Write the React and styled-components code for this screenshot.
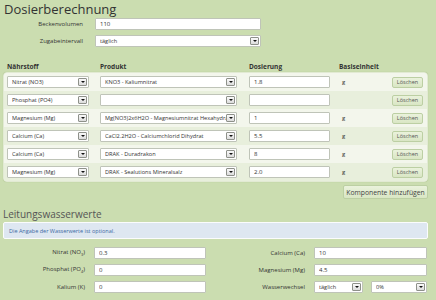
import React from "react";
import styled, { createGlobalStyle } from "styled-components";

const GlobalStyle = createGlobalStyle`
  html, body {
    margin: 0;
    background: #cbddb0;
    font-family: "Open Sans", "DejaVu Sans", sans-serif;
    color: #333;
  }
`;

const components = [
  { stoff: "Nitrat (NO3)", produkt: "KNO3 - Kaliumnitrat", dosis: "1.8", unit: "g" },
  { stoff: "Phosphat (PO4)", produkt: "", dosis: "", unit: "" },
  { stoff: "Magnesium (Mg)", produkt: "Mg(NO3)2x6H2O - Magnesiumnitrat Hexahydrat", dosis: "1", unit: "g" },
  { stoff: "Calcium (Ca)", produkt: "CaCl2.2H2O - Calciumchlorid Dihydrat", dosis: "5.5", unit: "g" },
  { stoff: "Calcium (Ca)", produkt: "DRAK - Duradrakon", dosis: "8", unit: "g" },
  { stoff: "Magnesium (Mg)", produkt: "DRAK - Sealutions Mineralsalz", dosis: "2.0", unit: "g" },
];

const Select = ({ value, width }) => (
  <SelectBox $width={width}>
    <SelectText>{value}</SelectText>
    <Arrow />
  </SelectBox>
);

const App = () => {
  return (
    <>
      <GlobalStyle />
      <Page>
        <Title>Dosierberechnung</Title>
        <TopForm>
          <Label>Beckenvolumen</Label>
          <TextInput defaultValue="110" />
          <Label>Zugabeintervall</Label>
          <Select value="täglich" width="166px" />
        </TopForm>

        <HeaderRow>
          <span>Nährstoff</span>
          <span>Produkt</span>
          <span>Dosierung</span>
          <span>Basiseinheit</span>
        </HeaderRow>
        <Panel>
          {components.map((c, i) => (
            <Row key={i} $odd={i % 2 === 1}>
              <Select value={c.stoff} width="82px" />
              <Select value={c.produkt} width="137px" />
              <TextInput defaultValue={c.dosis} $width="81px" />
              <Unit>{c.unit}</Unit>
              <SmallButton>Löschen</SmallButton>
            </Row>
          ))}
        </Panel>
        <Actions>
          <Button>Komponente hinzufügen</Button>
        </Actions>

        <SubTitle>Leitungswasserwerte</SubTitle>
        <Info>Die Angabe der Wasserwerte ist optional.</Info>

        <WaterGrid>
          <Label>Nitrat (NO<sub>3</sub>)</Label>
          <TextInput defaultValue="0.3" />
          <Label>Calcium (Ca)</Label>
          <TextInput defaultValue="10" />
          <Label>Phosphat (PO<sub>4</sub>)</Label>
          <TextInput defaultValue="0" />
          <Label>Magnesium (Mg)</Label>
          <TextInput defaultValue="4.5" />
          <Label>Kalium (K)</Label>
          <TextInput defaultValue="0" />
          <Label>Wasserwechsel</Label>
          <SelectPair>
            <Select value="täglich" width="49px" />
            <Select value="0%" width="56px" />
          </SelectPair>
        </WaterGrid>
      </Page>
    </>
  );
};

const Page = styled.div`
  width: 425px;
  padding: 1px 0 0 3px;
`;

const Title = styled.h1`
  margin: 0 0 0 1px;
  font-size: 13px;
  line-height: 17px;
  font-weight: 400;
  color: #333;
`;

const TopForm = styled.div`
  display: grid;
  grid-template-columns: 80px 166px;
  column-gap: 12px;
  row-gap: 5px;
  align-items: center;
`;

const Label = styled.label`
  text-align: right;
  font-size: 6px;
  color: #333;
  white-space: nowrap;
  sub {
    font-size: 4px;
  }
`;

const TextInput = styled.input`
  box-sizing: border-box;
  width: ${p => p.$width || "100%"};
  height: 12px;
  margin: 0;
  padding: 0 4px;
  border: 1px solid #bfc4b8;
  border-radius: 1px;
  background: #fff;
  font-family: inherit;
  font-size: 6px;
  color: #333;
  outline: none;
`;

const SelectBox = styled.div`
  box-sizing: border-box;
  width: ${p => p.$width};
  height: 12px;
  display: flex;
  align-items: center;
  padding: 0 1px 0 4px;
  border: 1px solid #bfc4b8;
  border-radius: 1px;
  background: #fff;
`;

const SelectText = styled.span`
  flex: 1;
  min-width: 0;
  font-size: 5.6px;
  color: #333;
  white-space: nowrap;
  overflow: hidden;
  text-overflow: clip;
`;

const Arrow = styled.span`
  box-sizing: border-box;
  width: 9px;
  height: 8px;
  flex: none;
  border: 1px solid #8e918a;
  border-radius: 1px;
  background: linear-gradient(#fafafa, #dcdcdc);
  display: flex;
  align-items: center;
  justify-content: center;
  &::after {
    content: "";
    border-left: 2px solid transparent;
    border-right: 2px solid transparent;
    border-top: 2px solid #111;
  }
`;

const columns = "93px 149px 93px 50px 31px";

const HeaderRow = styled.div`
  display: grid;
  grid-template-columns: ${columns};
  padding-left: 4px;
  margin-top: 13px;
  height: 12px;
  align-items: center;
  font-size: 6.5px;
  font-weight: 700;
  color: #333;
  span:nth-child(4) {
    margin-left: -3px;
  }
`;

const Panel = styled.div`
  box-sizing: border-box;
  width: 425px;
  border: 1px solid #e2ead3;
  border-radius: 4px;
  overflow: hidden;
  background: #f1f5ea;
  box-shadow: 0 0 1px rgba(120, 150, 90, 0.4);
`;

const Row = styled.div`
  display: grid;
  grid-template-columns: ${columns};
  align-items: center;
  height: 18px;
  padding-left: 3px;
  background: ${p => (p.$odd ? "#e8efdc" : "#f3f6ec")};
`;

const Unit = styled.span`
  font-size: 6px;
  color: #333;
`;

const SmallButton = styled.button`
  box-sizing: border-box;
  height: 11px;
  width: 31px;
  padding: 0;
  border: 1px solid #bccfa3;
  border-radius: 2px;
  background: linear-gradient(#eaf2dc, #d9e6c4);
  font-family: inherit;
  font-size: 5.5px;
  color: #555;
`;

const Actions = styled.div`
  display: flex;
  justify-content: flex-end;
  margin-top: 3px;
`;

const Button = styled.button`
  box-sizing: border-box;
  height: 14px;
  width: 85px;
  padding: 0;
  border: 1px solid #bccfa3;
  border-radius: 2px;
  background: linear-gradient(#eaf2dc, #d9e6c4);
  font-family: inherit;
  font-size: 6.8px;
  color: #444;
`;

const SubTitle = styled.h2`
  margin: 8px 0 0;
  font-size: 10px;
  line-height: 14px;
  font-weight: 400;
  color: #555;
`;

const Info = styled.div`
  box-sizing: border-box;
  height: 17px;
  margin-top: 1px;
  display: flex;
  align-items: center;
  padding-left: 5px;
  border: 1px solid #fbfcfd;
  border-radius: 2px;
  background: #dee7f1;
  font-size: 5.5px;
  color: #3b69a3;
`;

const WaterGrid = styled.div`
  display: grid;
  grid-template-columns: 82px 112px 90px 113px;
  column-gap: 9px;
  row-gap: 5px;
  align-items: center;
  margin-top: 8px;
`;

const SelectPair = styled.div`
  display: flex;
  gap: 8px;
`;

export default App;
